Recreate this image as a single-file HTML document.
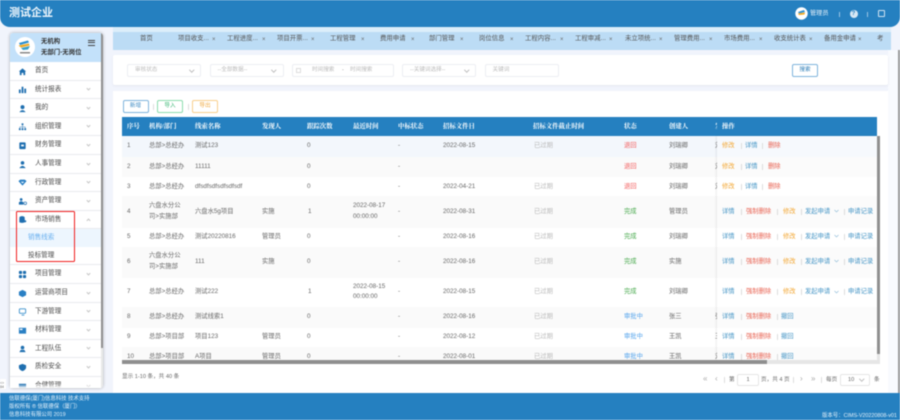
<!DOCTYPE html>
<html lang="zh"><head><meta charset="utf-8"><title>测试企业</title>
<style>
*{box-sizing:border-box;margin:0;padding:0}
html,body{width:900px;height:420px;overflow:hidden;background:#f1f4fc}
body{position:relative;font-family:"Liberation Sans","Noto Sans CJK SC",sans-serif;font-size:6.5px;color:#666}
#w{position:absolute;left:0;top:0;width:900px;height:420px;filter:blur(.4px);overflow:hidden}
.a,.t,.s{position:absolute}
.t{white-space:nowrap;line-height:10px;height:10px}
.i{position:absolute;left:10px;width:91px;height:18.6px;background:#fff;border-bottom:1px solid #e8eaee}
.i b{position:absolute;left:25px;top:4px;line-height:10px;font-weight:400;font-size:6.6px;color:#4a4a4a;white-space:nowrap}
.i i{position:absolute;left:76.5px;top:6.5px;width:3px;height:3px;border-right:.5px solid #c8c8c8;border-bottom:.5px solid #c8c8c8;transform:rotate(45deg)}
.i svg{position:absolute;left:8px;top:4.5px;width:9px;height:9px}
.tb{color:#555;font-size:6.4px}.x{color:#666;font-size:6px}
.in{position:absolute;top:64px;height:13px;border:1px solid #eceef3;border-radius:2px;background:#fff;color:#bbb;font-size:5.6px;line-height:11px;padding-left:7px;white-space:nowrap}
.in i{position:absolute;right:7px;top:2.5px;width:3.500px;height:3.500px;border-right:.5px solid #c0c0c0;border-bottom:.5px solid #c0c0c0;transform:rotate(45deg)}
.btn{position:absolute;top:100px;height:13px;width:26px;border-radius:2px;border:1px solid;background:#fff;text-align:center;line-height:11px;font-size:5.6px}
.h{position:absolute;top:122px;line-height:10px;color:#fff;font-weight:700;font-family:"Liberation Serif","Noto Serif CJK SC",serif;font-size:6.4px;white-space:nowrap}
.r{position:absolute;left:122px;width:755px}
.c{position:absolute;line-height:10px;white-space:nowrap;color:#666;font-size:6.3px}
.clip{width:2px;overflow:hidden}
.g{color:#b8b8b8}.rd{color:#f35f5f}.gn{color:#45a84a}.bl{color:#55a4ec}.o{color:#f3a733}.u{color:#4796c6}.e{color:#e8604f}
.l{position:absolute;width:.6px;height:6px;background:#ddd}
.foot{color:#e4f0fa;font-size:5.4px;left:9px}
</style></head><body><div id="w">

<div class="a" style="left:0;top:0;width:900px;height:27px;background:#2580c0;border-radius:0 0 10px 10px"></div>
<div class="t" style="left:9px;top:7px;height:13px;line-height:13px;color:#eef6fc;font-size:11px;font-weight:700">测试企业</div>
<svg class="a" style="left:795px;top:7px" width="13" height="13" viewBox="0 0 13 13"><circle cx="6.5" cy="6.5" r="6.2" fill="#fff"/><path d="M3 5 L9 3 L10 5 L4 6.5Z" fill="#2f8fd0"/><path d="M3 6.5 L10 5.5 L9.5 7.5 L4 8Z" fill="#f2a922"/></svg>
<div class="t" style="left:810px;top:9px;color:#e8f2fa;font-size:6.2px">管理员</div>
<div class="a" style="left:838.5px;top:12px;width:.6px;height:5px;background:#9cc6e4"></div>
<div class="a" style="left:849.5px;top:10px;width:8px;height:8px;border-radius:50%;background:#d8e8f4;color:#2580c0;font-size:6px;line-height:8px;text-align:center;font-weight:700">?</div>
<div class="a" style="left:867px;top:12px;width:.6px;height:5px;background:#9cc6e4"></div>
<div class="a" style="left:878px;top:10px;width:6.5px;height:7px;border:.6px solid #cfe3f2;border-radius:1px"></div>

<!-- tabs -->
<div class="a" style="left:113px;top:27px;width:778px;height:5px;background:#dceefa"></div>
<div class="a" style="left:113px;top:32px;width:778px;height:18px;background:#bcdcf5"></div>
<div class="t tb" style="left:140px;top:34px">首页</div>
<div class="t tb" style="left:178px;top:34px">项目收支...</div><div class="t x" style="left:212px;top:35px">×</div>
<div class="t tb" style="left:227px;top:34px">工程进度...</div><div class="t x" style="left:262px;top:35px">×</div>
<div class="t tb" style="left:277px;top:34px">项目开票...</div><div class="t x" style="left:311px;top:35px">×</div>
<div class="t tb" style="left:330px;top:34px">工程管理</div><div class="t x" style="left:361px;top:35px">×</div>
<div class="t tb" style="left:380px;top:34px">费用申请</div><div class="t x" style="left:411px;top:35px">×</div>
<div class="t tb" style="left:429px;top:34px">部门管理</div><div class="t x" style="left:460px;top:35px">×</div>
<div class="t tb" style="left:479px;top:34px">岗位信息</div><div class="t x" style="left:510px;top:35px">×</div>
<div class="t tb" style="left:525px;top:34px">工程内容...</div><div class="t x" style="left:560px;top:35px">×</div>
<div class="t tb" style="left:575px;top:34px">工程审减...</div><div class="t x" style="left:609px;top:35px">×</div>
<div class="t tb" style="left:625px;top:34px">未立项统...</div><div class="t x" style="left:659px;top:35px">×</div>
<div class="t tb" style="left:674px;top:34px">管理费用...</div><div class="t x" style="left:709px;top:35px">×</div>
<div class="t tb" style="left:724px;top:34px">市场费用...</div><div class="t x" style="left:759px;top:35px">×</div>
<div class="t tb" style="left:774px;top:34px">收支统计表</div><div class="t x" style="left:809px;top:35px">×</div>
<div class="t tb" style="left:824px;top:34px">备用金申请</div><div class="t x" style="left:858px;top:35px">×</div>
<div class="t tb" style="left:877px;top:34px">考</div>

<!-- right strip -->
<div class="a" style="left:888px;top:50px;width:12px;height:343px;background:#f8fafe"></div>
<div class="a" style="left:897.5px;top:50px;width:2px;height:343px;background:#9b9b9b"></div>

<!-- search -->
<div class="a" style="left:113px;top:55px;width:775px;height:30px;background:#fff;border-radius:2px;box-shadow:0 1px 2px #e4e7ef"></div>
<div class="in" style="left:127px;width:74px">审核状态<i></i></div>
<div class="in" style="left:209.500px;width:74px">--全部数据--<i></i></div>
<div class="in" style="left:292px;width:102px"><span style="position:absolute;left:3px;top:2.500px;width:5px;height:5px;border:.5px solid #ddd"></span><span style="position:absolute;left:19px">时间搜索</span><span style="position:absolute;left:49px;color:#999">-</span><span style="position:absolute;left:57px">时间搜索</span></div>
<div class="in" style="left:402px;width:74px">--关键词选择--<i></i></div>
<div class="in" style="left:484.500px;width:74px">关键词</div>
<div class="a" style="left:792px;top:63.500px;width:26px;height:13px;border:1px solid #7fb4dc;border-radius:2px;background:#fff;color:#2f7fb8;font-size:5.600px;line-height:11px;text-align:center">搜索</div>

<!-- table card -->
<div class="a" style="left:113px;top:91px;width:775px;height:302px;background:#fff"></div>
<div class="btn" style="left:122.500px;border-color:#7fb4dc;color:#3f8cc4">新增</div>
<div class="btn" style="left:157px;border-color:#8ddcae;color:#3fb878">导入</div>
<div class="btn" style="left:192px;border-color:#f9cf8c;color:#f0a83c">导出</div>
<div class="a" style="left:153px;top:104px;width:.6px;height:6px;background:#ddd"></div>
<div class="a" style="left:188px;top:104px;width:.6px;height:6px;background:#ddd"></div>

<div class="a" style="left:122px;top:117px;width:755px;height:19px;background:#2580c0"></div>
<div class="h" style="left:127px">序号</div><div class="h" style="left:149px">机构/部门</div><div class="h" style="left:195px">线索名称</div><div class="h" style="left:262px">发现人</div><div class="h" style="left:307px">跟踪次数</div><div class="h" style="left:353px">最近时间</div><div class="h" style="left:398px">中标状态</div><div class="h" style="left:443px">招标文件日</div><div class="h" style="left:533px">招标文件截止时间</div><div class="h" style="left:624px">状态</div><div class="h" style="left:669px">创建人</div><div class="h clip" style="left:715px">发</div><div class="h" style="left:722px">操作</div>

<div class="r" style="top:136px;height:21px;background:#f3f7fc"></div>
<div class="r" style="top:157px;height:20px;background:#fafafa"></div>
<div class="r" style="top:177px;height:19px;background:#fff"></div>
<div class="r" style="top:196px;height:32px;background:#fafafa"></div>
<div class="r" style="top:228px;height:19px;background:#fff"></div>
<div class="r" style="top:247px;height:31px;background:#fafafa"></div>
<div class="r" style="top:278px;height:29px;background:#fff"></div>
<div class="r" style="top:307px;height:21px;background:#fafafa"></div>
<div class="r" style="top:328px;height:19px;background:#fff"></div>
<div class="r" style="top:347px;height:13px;background:#fafafa"></div>

<!-- rows -->
<div class="c" style="left:127px;top:141px">1</div><div class="c" style="left:149px;top:141px">总部&gt;总经办</div><div class="c" style="left:195px;top:141px">测试123</div><div class="c" style="left:307px;top:141px">0</div><div class="c" style="left:398px;top:141px">-</div><div class="c" style="left:443px;top:141px">2022-08-15</div><div class="c g" style="left:534px;top:141px">已过期</div><div class="c rd" style="left:624px;top:141px">退回</div><div class="c" style="left:669px;top:141px">刘瑞卿</div><div class="c clip" style="left:715px;top:141px">刘</div>

<div class="c" style="left:127px;top:161.500px">2</div><div class="c" style="left:149px;top:161.500px">总部&gt;总经办</div><div class="c" style="left:195px;top:161.500px">11111</div><div class="c" style="left:307px;top:161.500px">0</div><div class="c" style="left:398px;top:161.500px">-</div><div class="c rd" style="left:624px;top:161.500px">退回</div><div class="c" style="left:669px;top:161.500px">刘瑞卿</div><div class="c clip" style="left:715px;top:161.500px">刘</div>

<div class="c" style="left:127px;top:181.500px">3</div><div class="c" style="left:149px;top:181.500px">总部&gt;总经办</div><div class="c" style="left:195px;top:181.500px">dfsdfsdfsdfsdfsdf</div><div class="c" style="left:307px;top:181.500px">0</div><div class="c" style="left:398px;top:181.500px">-</div><div class="c" style="left:443px;top:181.500px">2022-04-21</div><div class="c g" style="left:534px;top:181.500px">已过期</div><div class="c rd" style="left:624px;top:181.500px">退回</div><div class="c" style="left:669px;top:181.500px">刘瑞卿</div><div class="c clip" style="left:715px;top:181.500px">刘</div>

<div class="c" style="left:127px;top:206.500px">4</div><div class="c" style="left:149px;top:201px">六盘水分公</div><div class="c" style="left:149px;top:212px">司&gt;实施部</div><div class="c" style="left:195px;top:206.500px">六盘水5g项目</div><div class="c" style="left:262px;top:206.500px">实施</div><div class="c" style="left:308px;top:206.500px">1</div><div class="c" style="left:353px;top:201px">2022-08-17</div><div class="c" style="left:353px;top:212px">00:00:00</div><div class="c" style="left:398px;top:206.500px">-</div><div class="c" style="left:443px;top:206.500px">2022-08-31</div><div class="c g" style="left:534px;top:206.500px">已过期</div><div class="c gn" style="left:624px;top:206.500px">完成</div><div class="c" style="left:669px;top:206.500px">管理员</div>

<div class="c" style="left:127px;top:231.500px">5</div><div class="c" style="left:149px;top:231.500px">总部&gt;总经办</div><div class="c" style="left:195px;top:231.500px">测试20220816</div><div class="c" style="left:262px;top:231.500px">管理员</div><div class="c" style="left:307px;top:231.500px">0</div><div class="c" style="left:398px;top:231.500px">-</div><div class="c" style="left:443px;top:231.500px">2022-08-16</div><div class="c g" style="left:534px;top:231.500px">已过期</div><div class="c gn" style="left:624px;top:231.500px">完成</div><div class="c" style="left:669px;top:231.500px">刘瑞卿</div>

<div class="c" style="left:127px;top:256.500px">6</div><div class="c" style="left:149px;top:251px">六盘水分公</div><div class="c" style="left:149px;top:262px">司&gt;实施部</div><div class="c" style="left:195px;top:256.500px">111</div><div class="c" style="left:262px;top:256.500px">实施</div><div class="c" style="left:307px;top:256.500px">0</div><div class="c" style="left:398px;top:256.500px">-</div><div class="c" style="left:443px;top:256.500px">2022-08-16</div><div class="c g" style="left:534px;top:256.500px">已过期</div><div class="c gn" style="left:624px;top:256.500px">完成</div><div class="c" style="left:669px;top:256.500px">实施</div>

<div class="c" style="left:127px;top:287px">7</div><div class="c" style="left:149px;top:287px">总部&gt;总经办</div><div class="c" style="left:195px;top:287px">测试222</div><div class="c" style="left:308px;top:287px">1</div><div class="c" style="left:353px;top:282px">2022-08-15</div><div class="c" style="left:353px;top:292px">00:00:00</div><div class="c" style="left:398px;top:287px">-</div><div class="c" style="left:443px;top:287px">2022-08-15</div><div class="c g" style="left:534px;top:287px">已过期</div><div class="c gn" style="left:624px;top:287px">完成</div><div class="c" style="left:669px;top:287px">刘瑞卿</div>

<div class="c" style="left:127px;top:312px">8</div><div class="c" style="left:149px;top:312px">总部&gt;总经办</div><div class="c" style="left:195px;top:312px">测试线索1</div><div class="c" style="left:307px;top:312px">0</div><div class="c" style="left:398px;top:312px">-</div><div class="c" style="left:443px;top:312px">2022-08-16</div><div class="c g" style="left:534px;top:312px">已过期</div><div class="c bl" style="left:624px;top:312px">审批中</div><div class="c" style="left:669px;top:312px">张三</div><div class="c clip" style="left:715px;top:312px">张</div>

<div class="c" style="left:127px;top:332px">9</div><div class="c" style="left:149px;top:332px">总部&gt;项目部</div><div class="c" style="left:195px;top:332px">项目123</div><div class="c" style="left:262px;top:332px">管理员</div><div class="c" style="left:307px;top:332px">0</div><div class="c" style="left:398px;top:332px">-</div><div class="c" style="left:443px;top:332px">2022-08-12</div><div class="c g" style="left:534px;top:332px">已过期</div><div class="c bl" style="left:624px;top:332px">审批中</div><div class="c" style="left:669px;top:332px">王凯</div><div class="c clip" style="left:715px;top:332px">王</div>

<div class="c" style="left:127px;top:352px">10</div><div class="c" style="left:149px;top:352px">总部&gt;项目部</div><div class="c" style="left:195px;top:352px">A项目</div><div class="c" style="left:262px;top:352px">管理员</div><div class="c" style="left:307px;top:352px">0</div><div class="c" style="left:398px;top:352px">-</div><div class="c" style="left:443px;top:352px">2022-08-01</div><div class="c g" style="left:534px;top:352px">已过期</div><div class="c bl" style="left:624px;top:352px">审批中</div><div class="c" style="left:669px;top:352px">王凯</div><div class="c clip" style="left:715px;top:352px">刘</div>

<!-- fixed column -->
<div class="a" style="left:717px;top:136px;width:160px;height:224px;background:rgba(255,255,255,.25);box-shadow:-1px 0 2px rgba(0,0,0,.08)"></div>

<div class="c o" style="left:722px;top:141px">修改</div><div class="l" style="left:741px;top:143px"></div><div class="c u" style="left:745px;top:141px">详情</div><div class="l" style="left:762px;top:143px"></div><div class="c e" style="left:768px;top:141px">删除</div>
<div class="c o" style="left:722px;top:161.500px">修改</div><div class="l" style="left:741px;top:163.500px"></div><div class="c u" style="left:745px;top:161.500px">详情</div><div class="l" style="left:762px;top:163.500px"></div><div class="c e" style="left:768px;top:161.500px">删除</div>
<div class="c o" style="left:722px;top:181.500px">修改</div><div class="l" style="left:741px;top:183.500px"></div><div class="c u" style="left:745px;top:181.500px">详情</div><div class="l" style="left:762px;top:183.500px"></div><div class="c e" style="left:768px;top:181.500px">删除</div>

<div class="c u" style="left:722px;top:206.500px">详情</div><div class="l" style="left:741px;top:208.500px"></div><div class="c e" style="left:746px;top:206.500px">强制删除</div><div class="l" style="left:777px;top:208.500px"></div><div class="c o" style="left:783px;top:206.500px">修改</div><div class="l" style="left:801px;top:208.500px"></div><div class="c u" style="left:805px;top:206.500px">发起申请</div><svg class="a" style="left:834px;top:209px" width="5" height="4" viewBox="0 0 5 4"><path d="M.5 1 L2.500 3 L4.500 1" fill="none" stroke="#8ab8d6" stroke-width=".6"/></svg><div class="l" style="left:844px;top:208.500px"></div><div class="c u" style="left:848px;top:206.500px">申请记录</div>

<div class="c u" style="left:722px;top:231.500px">详情</div><div class="l" style="left:741px;top:233.500px"></div><div class="c e" style="left:746px;top:231.500px">强制删除</div><div class="l" style="left:777px;top:233.500px"></div><div class="c o" style="left:783px;top:231.500px">修改</div><div class="l" style="left:801px;top:233.500px"></div><div class="c u" style="left:805px;top:231.500px">发起申请</div><svg class="a" style="left:834px;top:234px" width="5" height="4" viewBox="0 0 5 4"><path d="M.5 1 L2.500 3 L4.500 1" fill="none" stroke="#8ab8d6" stroke-width=".6"/></svg><div class="l" style="left:844px;top:233.500px"></div><div class="c u" style="left:848px;top:231.500px">申请记录</div>

<div class="c u" style="left:722px;top:256.500px">详情</div><div class="l" style="left:741px;top:258.500px"></div><div class="c e" style="left:746px;top:256.500px">强制删除</div><div class="l" style="left:777px;top:258.500px"></div><div class="c o" style="left:783px;top:256.500px">修改</div><div class="l" style="left:801px;top:258.500px"></div><div class="c u" style="left:805px;top:256.500px">发起申请</div><svg class="a" style="left:834px;top:259px" width="5" height="4" viewBox="0 0 5 4"><path d="M.5 1 L2.500 3 L4.500 1" fill="none" stroke="#8ab8d6" stroke-width=".6"/></svg><div class="l" style="left:844px;top:258.500px"></div><div class="c u" style="left:848px;top:256.500px">申请记录</div>

<div class="c u" style="left:722px;top:287px">详情</div><div class="l" style="left:741px;top:289px"></div><div class="c e" style="left:746px;top:287px">强制删除</div><div class="l" style="left:777px;top:289px"></div><div class="c o" style="left:783px;top:287px">修改</div><div class="l" style="left:801px;top:289px"></div><div class="c u" style="left:805px;top:287px">发起申请</div><svg class="a" style="left:834px;top:289.500px" width="5" height="4" viewBox="0 0 5 4"><path d="M.5 1 L2.500 3 L4.500 1" fill="none" stroke="#8ab8d6" stroke-width=".6"/></svg><div class="l" style="left:844px;top:289px"></div><div class="c u" style="left:848px;top:287px">申请记录</div>

<div class="c u" style="left:722px;top:312px">详情</div><div class="l" style="left:741px;top:314px"></div><div class="c e" style="left:746px;top:312px">强制删除</div><div class="l" style="left:777px;top:314px"></div><div class="c u" style="left:781px;top:312px">撤回</div>
<div class="c u" style="left:722px;top:332px">详情</div><div class="l" style="left:741px;top:334px"></div><div class="c e" style="left:746px;top:332px">强制删除</div><div class="l" style="left:777px;top:334px"></div><div class="c u" style="left:781px;top:332px">撤回</div>
<div class="c u" style="left:722px;top:352px">详情</div><div class="l" style="left:741px;top:354px"></div><div class="c e" style="left:746px;top:352px">强制删除</div><div class="l" style="left:777px;top:354px"></div><div class="c u" style="left:781px;top:352px">撤回</div>

<!-- scrollbars -->
<div class="a" style="left:122px;top:360px;width:757px;height:4px;background:#e6e6e6"></div>
<div class="a" style="left:122px;top:360px;width:645px;height:3.500px;background:#8f8f8f"></div>
<div class="a" style="left:877px;top:136px;width:2.500px;height:228px;background:#e6e6e6"></div>
<div class="a" style="left:877px;top:136px;width:2.500px;height:218px;background:#8f8f8f"></div>

<!-- pagination -->
<div class="t" style="left:122px;top:372px;font-size:5.600px;color:#666">显示 1-10 条，共 40 条</div>
<div class="t" style="left:703px;top:374px;color:#aaa;font-size:8px">«</div><div class="t" style="left:715px;top:374px;color:#aaa;font-size:8px">‹</div>
<div class="a" style="left:724px;top:377px;width:.6px;height:6px;background:#ddd"></div>
<div class="t" style="left:729px;top:375px;font-size:5.600px">第</div>
<div class="a" style="left:737px;top:373.500px;width:22px;height:12px;border:1px solid #e6e6e6;border-radius:2px;color:#666;font-size:5.600px;line-height:10px;text-align:center">1</div>
<div class="t" style="left:761px;top:375px;font-size:5.600px">页，共 4 页</div>
<div class="a" style="left:793px;top:377px;width:.6px;height:6px;background:#ddd"></div>
<div class="t" style="left:800px;top:374px;color:#aaa;font-size:8px">›</div><div class="t" style="left:811px;top:374px;color:#aaa;font-size:8px">»</div>
<div class="a" style="left:821px;top:377px;width:.6px;height:6px;background:#ddd"></div>
<div class="t" style="left:826px;top:375px;font-size:5.600px">每页</div>
<div class="a" style="left:840px;top:373.500px;width:30px;height:12px;border:1px solid #e6e6e6;border-radius:2px;color:#666;font-size:5.600px;line-height:10px;padding-left:7px">10<span style="position:absolute;right:6px;top:2px;width:3.500px;height:3.500px;border-right:.5px solid #c0c0c0;border-bottom:.5px solid #c0c0c0;transform:rotate(45deg)"></span></div>
<div class="t" style="left:874px;top:375px;font-size:5.600px">条</div>

<!-- sidebar -->
<div class="a" style="left:10px;top:33px;width:93px;height:355px;background:#fff;border-radius:3px;box-shadow:0 0 3px rgba(0,0,0,.3);overflow:hidden">
<div class="a" style="left:0;top:0;width:91px;height:29px;background:#c3e1fa"></div>
<svg class="a" style="left:4.500px;top:4px" width="20" height="20" viewBox="0 0 20 20"><circle cx="10" cy="10" r="10" fill="#fff"/><path d="M4 6 L13 3.500 L14 5.500 L5 8Z" fill="#2a8fd0"/><path d="M3.500 8.500 L14 6.500 L14.500 8.500 L6 10.500Z" fill="#f2a922"/><path d="M6 11 L15 9 L13 12.500 L8 13Z" fill="#3aa0c8"/><rect x="5" y="15" width="10" height="1.500" fill="#888"/></svg>
<div class="t" style="left:31px;top:3.500px;color:#333;font-size:6.400px;font-weight:700">无机构</div>
<div class="t" style="left:31px;top:14.500px;color:#333;font-size:6.400px;font-weight:700">无部门-无岗位</div>
<div class="a" style="left:78px;top:6.500px;width:7px;height:1.200px;background:#444"></div>
<div class="a" style="left:78px;top:9px;width:7px;height:1.200px;background:#444"></div>
<div class="a" style="left:78px;top:11.500px;width:7px;height:1.200px;background:#444"></div>
<div class="a" style="left:91px;top:0;width:2.500px;height:315px;background:#8f8f8f"></div>
<div class="a" style="left:91px;top:315px;width:2.500px;height:40px;background:#e8e8e8"></div>
</div>

<div class="i" style="top:62px"><svg viewBox="0 0 10 10"><path d="M5 1.500 L9 5 H8 V9 H6 V6.500 H4 V9 H2 V5 H1Z" fill="#1f6fb0"/></svg><b>首页</b></div>
<div class="i" style="top:80.600px"><svg viewBox="0 0 10 10"><path d="M1 9 V5 H3 V9Z M4 9 V2 H6 V9Z M7 9 V4 H9 V9Z" fill="#1f6fb0"/></svg><b>统计报表</b><i></i></div>
<div class="i" style="top:99.200px"><svg viewBox="0 0 10 10"><circle cx="5" cy="3.500" r="2.200" fill="#1f6fb0"/><path d="M1.500 9 Q5 4.500 8.500 9Z" fill="#1f6fb0"/></svg><b>我的</b><i></i></div>
<div class="i" style="top:117.800px"><svg viewBox="0 0 10 10"><path d="M4 1.500H6V3.500H4Z M1 7H3V9H1Z M4 7H6V9H4Z M7 7H9V9H7Z" fill="#1f6fb0"/><path d="M2 7V5.500H8V7M5 3.500V7" fill="none" stroke="#1f6fb0" stroke-width=".5"/></svg><b>组织管理</b><i></i></div>
<div class="i" style="top:136.400px"><svg viewBox="0 0 10 10"><rect x="1.500" y="1.500" width="7" height="7.500" rx="1" fill="#1f6fb0"/><rect x="3.500" y="4" width="3" height="2" fill="#fff"/></svg><b>财务管理</b><i></i></div>
<div class="i" style="top:155px"><svg viewBox="0 0 10 10"><circle cx="5" cy="3.200" r="2" fill="#1f6fb0"/><path d="M1.500 9 Q5 4 8.500 9Z" fill="#1f6fb0"/></svg><b>人事管理</b><i></i></div>
<div class="i" style="top:173.600px"><svg viewBox="0 0 10 10"><path d="M.5 3.500 L2.500 1.800 H7.500 L9.500 3.500 L5 8.500Z" fill="#2a80c4"/><path d="M3 4.200H7L5 6Z" fill="#fff"/></svg><b>行政管理</b><i></i></div>
<div class="i" style="top:192.200px"><svg viewBox="0 0 10 10"><circle cx="3.500" cy="2.800" r="1.500" fill="#1f6fb0"/><path d="M1 8.500 V6 Q3.500 3.500 6 6 V8.500Z" fill="#1f6fb0"/><circle cx="8" cy="7" r="1.500" fill="none" stroke="#1f6fb0" stroke-width=".8"/></svg><b>资产管理</b><i></i></div>
<div class="i" style="top:210.800px"><svg viewBox="0 0 10 10"><ellipse cx="4.500" cy="2.800" rx="3" ry="1.500" fill="#1f6fb0"/><path d="M1.500 3.500V8Q4.500 9.500 7.500 8V3.500Z" fill="#1f6fb0"/><circle cx="8" cy="7" r="1.200" fill="#1f6fb0"/></svg><b>市场销售</b><i style="transform:rotate(225deg);top:8px"></i></div>
<div class="i" style="top:229.400px;height:18px;background:#edf6fe;border:0"><b style="left:18px;color:#66aeef">销售线索</b></div>
<div class="i" style="top:247.400px;height:18px"><b style="left:18px">投标管理</b></div>
<div class="i" style="top:265.400px"><svg viewBox="0 0 10 10"><rect x="1" y="1" width="3.500" height="3.500" rx="1" fill="#1f6fb0"/><rect x="5.500" y="1" width="3.500" height="3.500" rx="1" fill="#1f6fb0"/><rect x="1" y="5.500" width="3.500" height="3.500" rx="1" fill="#1f6fb0"/><rect x="5.500" y="5.500" width="3.500" height="3.500" rx="1" fill="#1f6fb0"/></svg><b>项目管理</b><i></i></div>
<div class="i" style="top:284px"><svg viewBox="0 0 10 10"><path d="M5 1 L9 3 V7 L5 9 L1 7 V3Z" fill="#2a80c4"/></svg><b>运营商项目</b><i></i></div>
<div class="i" style="top:302.600px"><svg viewBox="0 0 10 10"><rect x="1.500" y="2" width="7" height="5" rx="1" fill="none" stroke="#3a90cc" stroke-width="1"/><path d="M4 9H7" stroke="#3a90cc"/></svg><b>下游管理</b><i></i></div>
<div class="i" style="top:321.200px"><svg viewBox="0 0 10 10"><rect x="1" y="2" width="8" height="6.500" fill="#2a80c4"/><rect x="2" y="3" width="3" height="1.500" fill="#fff"/></svg><b>材料管理</b><i></i></div>
<div class="i" style="top:339.800px"><svg viewBox="0 0 10 10"><circle cx="5" cy="4" r="2" fill="#1f6fb0"/><path d="M1.500 9H8.500L7 6.500H3Z" fill="#1f6fb0"/></svg><b>工程队伍</b><i></i></div>
<div class="i" style="top:358.400px"><svg viewBox="0 0 10 10"><path d="M5 1 L9 2.500 V5.500 Q8 8 5 9 Q2 8 1 5.500 V2.500Z" fill="#1f6fb0"/></svg><b>质检安全</b><i></i></div>
<div class="i" style="top:377px;height:11px;border:0;overflow:hidden"><svg viewBox="0 0 10 10"><rect x="1" y="2" width="8" height="7" fill="#1f6fb0"/></svg><b>合健管理</b><i></i></div>
<div class="a" style="left:10px;top:384px;width:91px;height:4px;background:linear-gradient(rgba(255,255,255,0),#fff);border-radius:0 0 3px 3px"></div>

<!-- red annotation -->
<div class="a" style="left:16px;top:210.500px;width:58.500px;height:51.500px;border:1.300px solid #f01f1f;border-radius:1.500px"></div>

<!-- left tiny -->
<div class="a" style="left:0;top:379px;width:6px;height:10px;background:#fff"></div>
<div class="t" style="left:0;top:378px;font-size:3.500px;color:#666">&lt;&gt;</div>
<div class="t" style="left:0;top:382px;font-size:3.500px;color:#666">84</div>

<!-- footer -->
<div class="a" style="left:0;top:393px;width:900px;height:27px;background:#2580c0"></div>
<div class="t foot" style="top:393.500px">信联德保(厦门)信息科技 技术支持</div>
<div class="t foot" style="top:401.500px">版权所有 ® 信联德保（厦门）</div>
<div class="t foot" style="top:409.500px">信息科技有限公司 2019</div>
<div class="t" style="left:822px;top:411px;color:#e4f0fa;font-size:5.400px">版本号：CIMS-V20220808-v01</div>
</div></body></html>
